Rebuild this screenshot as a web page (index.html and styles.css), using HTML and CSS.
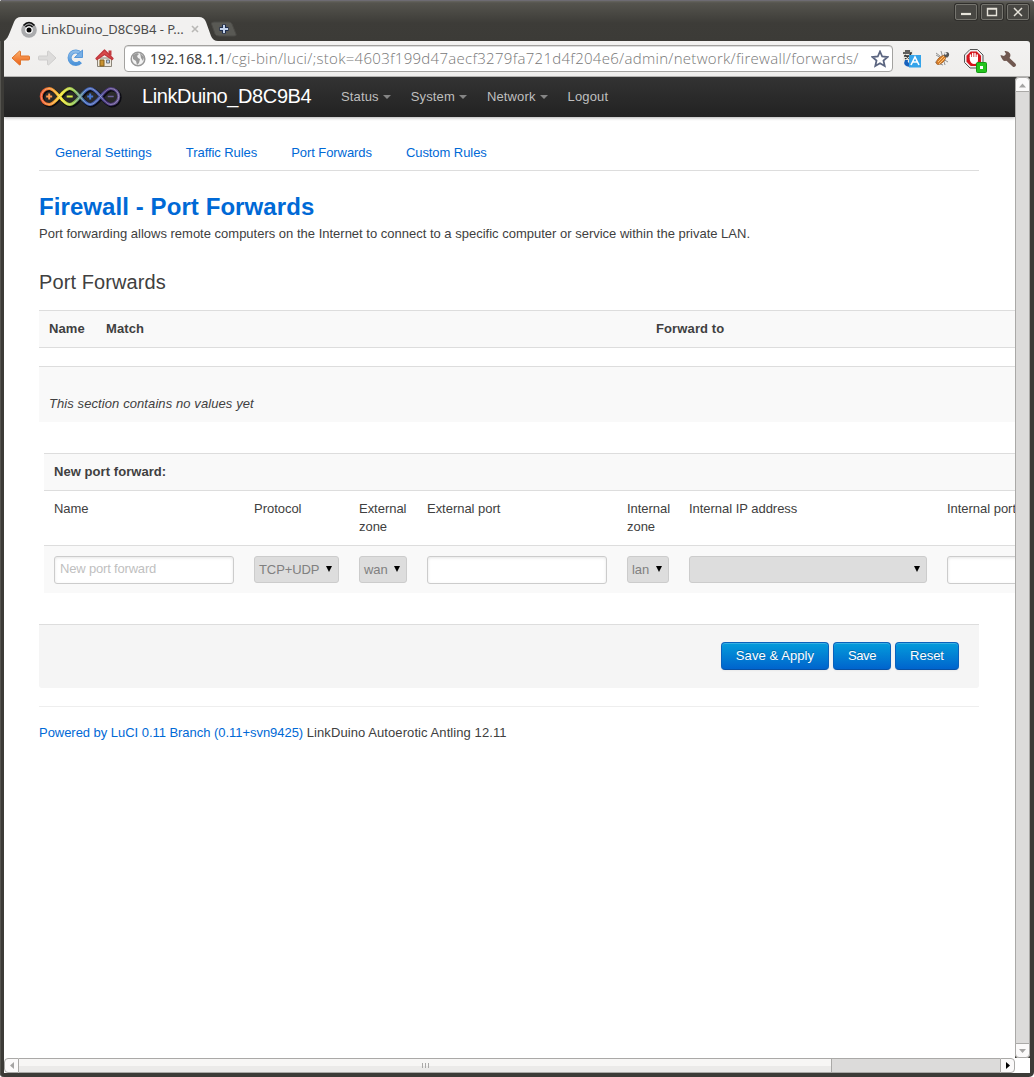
FILE: index.html
```html
<!DOCTYPE html>
<html lang="en">
<head>
<meta charset="utf-8">
<title>LinkDuino_D8C9B4 - Port Forwards</title>
<link rel="stylesheet" href="styles.css">
</head>
<body>
<div class="window">
  <header class="titlebar">
    <svg class="tab-shape" width="250" height="41" viewBox="0 0 250 41">
      <path d="M4 41C7 39 8 37 10 32L14 22Q16 17 21 17H199Q204 17 206 22L211 36Q213 41 218 41Z" fill="#f2f1f0"/>
      <path d="M211.500 24Q211 22 214 22H229Q231 22 232 24L236 34Q237 36 234 36H219Q216 36 215 34Z" fill="#595954" stroke="#4b4a46"/>
      <path d="M224 24.500v9M219.500 29h9" stroke="#1e2d4d" stroke-width="4"/>
      <path d="M224 25v8M220 29h8" stroke="#c3d3ec" stroke-width="2"/>
    </svg>
    <div class="tab">
      <svg width="16" height="17" viewBox="0 0 16 17"><circle cx="8" cy="9" r="7.800" fill="#aaabad"/><circle cx="8" cy="9" r="3.800" fill="#fff"/><circle cx="8" cy="9" r="2.500" fill="#000"/><path d="M2.500 4.500Q8-1.500 13.500 4.500M4.500 6Q8 2.500 11.500 6" fill="none" stroke="#111" stroke-width="1.600"/></svg>
      <span class="tab-title">LinkDuino_D8C9B4 - P...</span>
      <svg width="8" height="8" viewBox="0 0 8 8"><path d="M1 1l6 6M7 1L1 7" stroke="#b9b8b6" stroke-width="1.600"/></svg>
    </div>
    <div class="controls">
      <span><svg width="22" height="16"><path d="M6 10h10" stroke="#e6e3da" stroke-width="2.200"/></svg></span>
      <span><svg width="22" height="16"><path d="M6.500 4.500h9v7h-9zM6 5h10" fill="none" stroke="#e6e3da" stroke-width="1.400"/></svg></span>
      <span><svg width="22" height="16"><path d="M7 4l8 8M15 4l-8 8" stroke="#e6e3da" stroke-width="1.500"/></svg></span>
    </div>
  </header>

  <div class="toolbar">
    <svg class="nav-icons" width="108" height="24" viewBox="0 0 108 24">
      <defs>
        <linearGradient id="orange" x2="0" y2="1"><stop stop-color="#fbb16d"/><stop offset="1" stop-color="#ec6015"/></linearGradient>
        <linearGradient id="blue" x2="0" y2="1"><stop stop-color="#8dbce9"/><stop offset="1" stop-color="#4b93d9"/></linearGradient>
      </defs>
      <path d="M1 12l7-6.500q1-1 1.500 0V10h8q1 0 1 1v2q0 1-1 1h-8v4.500q-.5 1-1.500 0z" fill="url(#orange)" stroke="#e0752c" stroke-linejoin="round"/>
      <path d="M45 12l-7-6.500q-1-1-1.500 0V10h-8q-1 0-1 1v2q0 1 1 1h8v4.500q.5 1 1.500 0z" fill="#dddcdb" stroke="#cfcecd" stroke-linejoin="round"/>
      <path d="M69.500 7.500A6.300 6.300 0 1 0 69.500 16" fill="none" stroke="#5698da" stroke-width="4"/>
      <path d="M69.500 7.500A6.300 6.300 0 1 0 69.500 16" fill="none" stroke="url(#blue)" stroke-width="2.600"/>
      <path d="M71.500 4v7.500h-8z" fill="#78afe5" stroke="#5698da"/>
      <path d="M86.500 12h14v8.500h-14z" fill="#eee9df" stroke="#8b8578"/>
      <path d="M89 14h4v6h-4z" fill="#c99230" stroke="#85611c"/><path d="M95.500 14h3v3h-3z" fill="#b6d2ee" stroke="#777"/>
      <path d="M97.500 4.500h3v5h-3z" fill="#c33b3f"/>
      <path d="M85 12.500l8.500-8.500 8.500 8.500-1 1-7.500-5-7.500 5z" fill="#d94b4b" stroke="#c0363c" stroke-width="1.300" stroke-linejoin="round"/>
    </svg>
    <div class="address">
      <svg width="16" height="16" viewBox="0 0 16 16"><circle cx="8" cy="8" r="6.800" fill="#f3f3f3" stroke="#999" stroke-width="1.500"/><path d="M3 4l4-2 2 1-2 2 1 2 2 1-1 4-2 2-1-4-3-2zM10 2l4 4-1 4-2-3z" fill="#999"/></svg>
      <span class="url"><b>192.168.1.1</b>/cgi-bin/luci/;stok=4603f199d47aecf3279fa721d4f204e6/admin/network/firewall/forwards/</span>
      <svg class="star" width="18" height="18" viewBox="0 0 18 18"><path d="M9 1.500l2.200 5 5.400.5-4.100 3.600 1.200 5.400L9 13.200 4.300 16l1.200-5.400L1.400 7l5.400-.5z" fill="#fff" stroke="#5b6580" stroke-width="1.800"/></svg>
    </div>
    <svg class="extensions" width="120" height="28" viewBox="900 45 120 28">
      <rect x="903" y="50" width="10" height="11" fill="#e9e8df"/><path d="M903 53h9M905 51h5M904 56h8M905 59l6-5M911 60l-6-5" stroke="#333" stroke-width="1.300"/>
      <path d="M905 60q-3 6 5 7v-4q-3 0-2-3z" fill="#1862bd"/><rect x="909" y="55" width="12" height="12.500" fill="#35a4ea"/><path d="M911 65l4-8 4 8M912.500 62h5" fill="none" stroke="#fff" stroke-width="1.600"/>
      <path d="M936 55l12 7M941 51l4 14M935 62l8 3M936 53l4 3M948 57l-8 1" stroke="#777" stroke-width=".8"/>
      <ellipse cx="941" cy="60" rx="5.800" ry="2.900" transform="rotate(-42 941 60)" fill="#d97d28" stroke="#a5642a" stroke-width=".8"/><path d="M938 62l6-6M939 64l6-6" stroke="#f8c477"/><circle cx="946.500" cy="54.500" r="2.600" fill="#555"/><circle cx="945.500" cy="53.500" r="1.200" fill="#eee"/>
      <path d="M970 49.500h7.500l5.500 5.500v7.500l-5.500 5.500H970l-5.500-5.500V55z" fill="#eee" stroke="#555"/><path d="M970.700 51.500h6l4.300 4.300v6l-4.300 4.200h-6l-4.200-4.200v-6z" fill="#d5141c"/>
      <path d="M970.500 58v-3M972.700 58v-4.500M975 58v-4.500M977.200 59v-4" stroke="#fff" stroke-width="1.500" stroke-linecap="round"/><path d="M969.800 57h8.200v3q0 4-4 4-3 0-4.200-4z" fill="#fff"/>
      <rect x="976.500" y="62.500" width="10" height="10" rx="1" fill="#24c51e" stroke="#149714"/><rect x="980" y="66" width="3" height="3" fill="#fff"/>
      <path d="M1006 57.500L1014 65" stroke="#705850" stroke-width="4" stroke-linecap="round"/><path d="M1000.500 55l3.500 1 2-2-1.500-3q4-.5 5.500 2.500t-2 6-5.500 0-2-4.500z" fill="#705850"/>
    </svg>
  </div>

  <div class="viewport">
    <div class="page">
      <nav class="navbar">
        <svg class="logo" width="84" height="24" viewBox="0 0 84 24">
          <defs><linearGradient id="rainbow" gradientUnits="userSpaceOnUse" x1="0" x2="84" y1="0" y2="0"><stop stop-color="#e6452a"/><stop offset=".17" stop-color="#f79a2e"/><stop offset=".27" stop-color="#f2e630"/><stop offset=".42" stop-color="#8fc54b"/><stop offset=".55" stop-color="#3d63b8"/><stop offset=".7" stop-color="#4a5fae"/><stop offset=".8" stop-color="#443079"/><stop offset="1" stop-color="#6a5a91"/></linearGradient></defs>
          <g transform="translate(-.3 0)">
          <path d="M10.500 3.500C18 3.500 23 19.500 31 19.500S44 3.500 51.500 3.500 65 19.500 72 19.500a8 8 0 0 0 0-16C65 3.500 59 19.500 51.500 19.500S38.500 3.500 31 3.500 18 19.500 10.500 19.500a8 8 0 0 1 0-16z" fill="none" stroke="#0b0b12" stroke-width="4" transform="translate(1 1)"/>
          <path d="M10.500 3.500C18 3.500 23 19.500 31 19.500S44 3.500 51.500 3.500 65 19.500 72 19.500a8 8 0 0 0 0-16C65 3.500 59 19.500 51.500 19.500S38.500 3.500 31 3.500 18 19.500 10.500 19.500a8 8 0 0 1 0-16z" fill="none" stroke="url(#rainbow)" stroke-width="3"/>
          <path d="M10.500 3.500C18 3.500 23 19.500 31 19.500S44 3.500 51.500 3.500 65 19.500 72 19.500a8 8 0 0 0 0-16C65 3.500 59 19.500 51.500 19.500S38.500 3.500 31 3.500 18 19.500 10.500 19.500a8 8 0 0 1 0-16z" fill="none" stroke="#fff" stroke-opacity=".35" stroke-width="1"/>
          <path d="M7.500 11.500h6M10.500 8.500v6" stroke="#ff9b51" stroke-width="2"/><path d="M28 11.500h6" stroke="#d8ee43" stroke-width="2"/><path d="M48.500 11.500h6M51.500 8.500v6" stroke="#4776d3" stroke-width="2"/><path d="M69 11.500h6" stroke="#6c609b" stroke-width="1.500"/>
          </g>
        </svg>
        <a class="brand">LinkDuino_D8C9B4</a>
        <a class="menu caret">Status</a><a class="menu caret">System</a><a class="menu caret">Network</a><a class="menu">Logout</a>
      </nav>
      <main class="container">
        <ul class="tabs"><li>General Settings</li><li>Traffic Rules</li><li>Port Forwards</li><li>Custom Rules</li></ul>
        <h2>Firewall - Port Forwards</h2>
        <p class="description">Port forwarding allows remote computers on the Internet to connect to a specific computer or service within the private LAN.</p>
        <h3>Port Forwards</h3>
        <div class="forwards">
          <div class="forwards-head"><span>Name</span><span>Match</span><span>Forward to</span></div>
          <div class="empty"><em>This section contains no values yet</em></div>
        </div>
        <div class="new-forward">
          <div class="new-title">New port forward:</div>
          <div class="fields labels"><span>Name</span><span>Protocol</span><span>External zone</span><span>External port</span><span>Internal zone</span><span>Internal IP address</span><span>Internal port</span></div>
          <div class="fields inputs">
            <input type="text" placeholder="New port forward">
            <div class="select">TCP+UDP</div>
            <div class="select">wan</div>
            <input type="text">
            <div class="select">lan</div>
            <div class="select"></div>
            <input type="text">
          </div>
        </div>
        <div class="actions"><button class="apply">Save &amp; Apply</button><button class="save">Save</button><button>Reset</button></div>
        <footer><a>Powered by LuCI 0.11 Branch (0.11+svn9425)</a> <span>LinkDuino Autoerotic Antling 12.11</span></footer>
      </main>
    </div>
    <div class="vscroll">
      <i class="cap"><svg width="13" height="14"><path d="M3 9.500h7L6.500 5.500z" fill="#a5a4a3"/></svg></i>
      <i class="cap"><svg width="13" height="14"><path d="M3 5h7L6.500 9z" fill="#a5a4a3"/></svg></i>
    </div>
  </div>
  <div class="hscroll">
    <i class="cap"><svg width="14" height="13"><path d="M9 3v7L5 6.500z" fill="#a5a4a3"/></svg></i>
    <div class="thumb"><svg width="8" height="5"><path d="M1.500 0v5M4.500 0v5M7.500 0v5" stroke="#aaa9a8"/></svg></div>
    <div class="track"></div>
    <i class="cap"><svg width="13" height="13"><path d="M5 3v7l4-3.500z" fill="#000"/></svg></i>
  </div>
</div>
</body>
</html>
```
FILE: styles.css
```css
* { box-sizing: border-box; }
body { margin: 0; background: #fff; font: 13px/18px "Liberation Sans", Arial, sans-serif; color: #404040; }
svg { display: block; flex: none; }

.window { display: flex; flex-direction: column; width: 1034px; height: 1077px; padding: 0 4px 4px; background: #3c3b37; border-radius: 3px 4px 5px 4px; overflow: hidden; box-shadow: inset 1px 0 #55544f, inset 0 1px #6e6d68; }

/* Window frame */
.titlebar { position: relative; display: flex; justify-content: space-between; height: 41px; margin: 0 -4px; background: linear-gradient(#65645f 0, #55544e 2px, #3d3c38 22px, #3c3b37); border-top: 1px solid #6d6b72; flex: none; }
.tab-shape { position: absolute; left: 0; top: -1px; }
.tab { position: relative; display: flex; align-items: center; height: 18px; margin: 19px 0 0 21px; }
.tab-title { width: 144px; margin: 0 6px 0 4px; font: 13px/18px "Noto Sans", sans-serif; color: #4c4c4c; white-space: nowrap; letter-spacing: -.05px; }
.controls { display: flex; gap: 4px; padding: 3px 5px 0 0; }
.controls span { width: 22px; height: 16px; background: #484743; border: 1px solid #76756f; border-radius: 2px; box-shadow: 0 0 0 1px #302f2c; }
.controls svg { margin: -1px; }

.toolbar { display: flex; height: 36px; background: linear-gradient(#f3f2f1, #efeeec); border-bottom: 1px solid #b5b4b2; border-radius: 0 3px 0 0; flex: none; }
.nav-icons { margin: 5px 1px 0 7px; }
.address { display: flex; align-items: center; width: 769px; height: 27px; margin: 4px 0 0 4px; padding: 0 3px 0 5px; border: 1px solid #a3a2a0; border-radius: 4px; background: #fff; box-shadow: inset 0 1px #ddd; flex: none; }
.url { flex: 1; margin-left: 4px; font: 300 15px/24px "Open Sans", "Noto Sans", sans-serif; letter-spacing: .29px; color: #777; white-space: nowrap; }
.url b { font: 14px/24px "Noto Sans", sans-serif; letter-spacing: .08px; color: #3c3c3c; }
.extensions { margin: 4px -5px 0 7px; }

/* Page */
.viewport { display: flex; height: 981px; flex: none; }
.page { width: 1011px; background: #fff; overflow: hidden; }
.navbar { display: flex; align-items: center; height: 40px; padding-left: 35px; background: linear-gradient(#333, #222); box-shadow: 0 1px 3px rgba(0,0,0,.3); color: #bfbfbf; }
.brand { width: 199px; margin: -2px 0 0 19px; color: #fff; font-size: 20px; letter-spacing: -.4px; }
.menu { margin-right: 20px; letter-spacing: .14px; }
.caret::after { content: ""; display: inline-block; vertical-align: 2px; margin-left: 4px; border: 4px solid transparent; border-top-color: #858585; border-bottom: 0; }
.container { padding: 24px 0 0 35px; }
.tabs { display: flex; gap: 34px; width: 940px; height: 30px; margin: 0 0 18px; padding: 3px 16px; list-style: none; border-bottom: 1px solid #ddd; color: #0069d6; }
.tabs li + li { letter-spacing: -.07px; }
h2 { margin: 0; font-size: 24px; line-height: 36px; color: #0069d6; letter-spacing: .08px; }
p { margin: 0; }
.description { white-space: nowrap; }
h3 { margin: 21px 0 10px; font-size: 20px; line-height: 36px; font-weight: normal; letter-spacing: .1px; }

.forwards { width: 1400px; }
.forwards-head { display: grid; grid-template-columns: 57px 550px 1fr; height: 38px; padding: 9px 10px; border: solid #ddd; border-width: 1px 0; background: #f9f9f9; font-weight: bold; letter-spacing: .12px; }
.empty { height: 56px; margin-top: 18px; padding: 28px 10px 0; border-top: 1px solid #ddd; background: #f9f9f9; letter-spacing: .09px; }
.new-forward { width: 1400px; margin: 31px 0 0 5px; }
.new-title { height: 37px; padding: 9px 10px; border-top: 1px solid #ddd; background: #f9f9f9; font-weight: bold; letter-spacing: .06px; }
.fields { display: grid; grid-template-columns: 180px 85px 48px 180px 42px 238px 180px; column-gap: 20px; padding: 9px 10px; border-top: 1px solid #ddd; }
.labels { height: 55px; letter-spacing: -.03px; }
.inputs { height: 48px; padding-top: 10px; background: #f9f9f9; }
input { width: 180px; height: 28px; padding: 0 4px 3px 5px; border: 1px solid #ccc; border-radius: 3px; background: #fff; box-shadow: inset 0 1px 3px rgba(0,0,0,.1); font: inherit; letter-spacing: -.18px; }
input::placeholder { color: #bfbfbf; opacity: 1; }
.select { display: flex; align-items: center; justify-content: space-between; height: 27px; padding: 0 6px 0 4px; border: 1px solid #ccc; border-radius: 3px; background: #ddd; color: #808080; letter-spacing: -.1px; }
.select::after { content: ""; margin: -2px 0 0 auto; border: 3px solid transparent; border-top: 6px solid #000; border-bottom: 0; }

.actions { display: flex; justify-content: flex-end; gap: 4px; width: 940px; height: 64px; margin-top: 31px; padding: 17px 20px; border-top: 1px solid #ddd; border-radius: 0 0 3px 3px; background: #f5f5f5; }
button { width: 64px; height: 28px; padding: 0 0 1px; border: 1px solid; border-color: #0a62bd #0a62bd #0850a4; border-radius: 4px; background: linear-gradient(#049cdb, #0064cd); box-shadow: inset 0 1px rgba(255,255,255,.2), 0 1px 2px rgba(0,0,0,.05); color: #fff; font: inherit; text-shadow: 0 -1px rgba(0,0,0,.25); }
.apply { width: 108px; letter-spacing: .08px; }
.save { width: 58px; letter-spacing: -.4px; }
footer { width: 940px; margin-top: 18px; padding-top: 17px; border-top: 1px solid #eee; }
footer a { color: #0069d6; letter-spacing: -.04px; }
footer span { letter-spacing: .08px; }

/* Scrollbars */
.cap { display: flex; border: 1px solid #aaa9a7; background: #fbfafa; }
.vscroll { display: flex; flex-direction: column; justify-content: space-between; width: 15px; border: solid #aaa9a7; border-width: 0 1px; background: #dcdbda; border-radius: 4px; }
.vscroll .cap { height: 15px; margin: 0 -1px; border-radius: 4px 4px 0 0; }
.vscroll .cap:last-child { border-radius: 0 0 4px 4px; }
.hscroll { display: flex; height: 15px; margin-right: 0; padding-right: 15px; background: #fff; flex: none; }
.hscroll .cap { width: 15px; border-radius: 4px 0 0 4px; }
.hscroll .cap:last-child { border-radius: 0 4px 4px 0; }
.thumb { display: flex; align-items: center; justify-content: center; width: 813px; border: solid #aaa9a7; border-width: 1px 1px 1px 0; background: linear-gradient(#f7f6f5 50%, #ebeae9 50%); }
.track { flex: 1; border: solid #aaa9a7; border-width: 1px 0; background: #dcdbda; }
```
